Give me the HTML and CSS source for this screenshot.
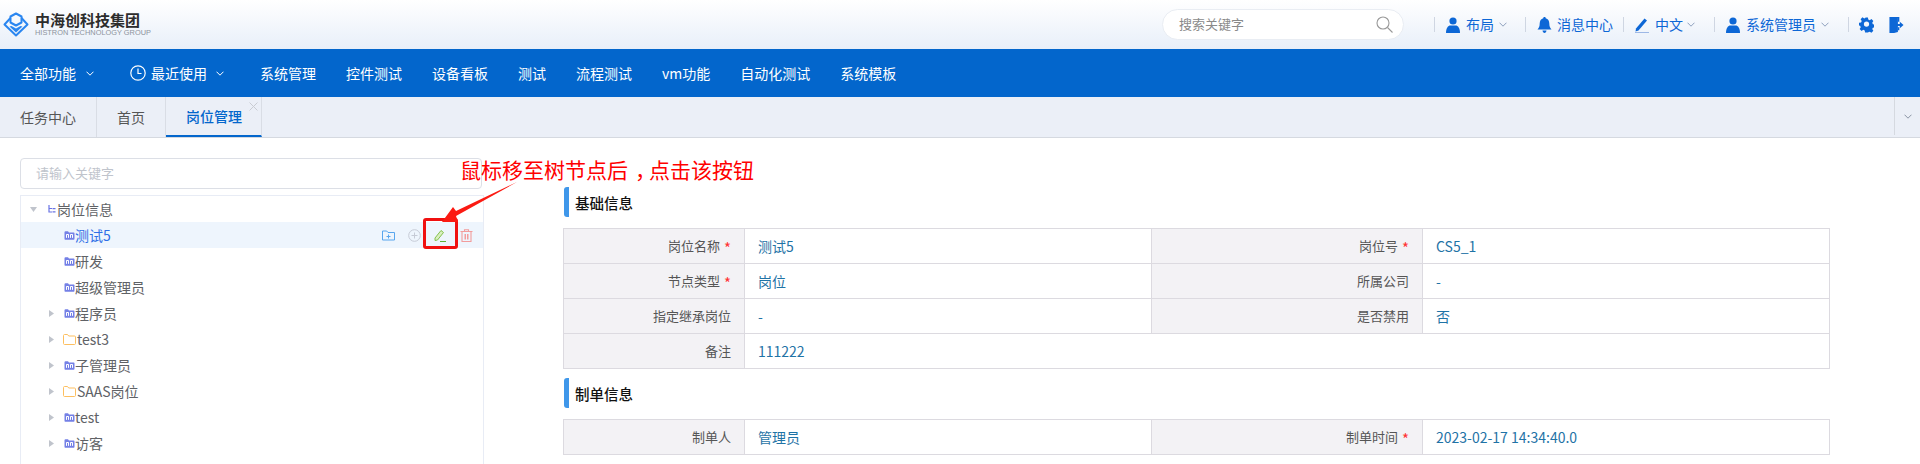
FILE: index.html
```html
<!DOCTYPE html>
<html lang="zh-CN">
<head>
<meta charset="utf-8">
<title>岗位管理</title>
<link rel="stylesheet" href="styles.css">
</head>
<body>
<svg class="defs" aria-hidden="true">
  <symbol id="i-person" viewBox="0 0 16 16"><circle cx="8" cy="4" r="3.6" fill="currentColor"/><path d="M1 16c0-5 2-7.5 4.500-7.500h5C13 8.500 15 11 15 16z" fill="currentColor"/></symbol>
  <symbol id="i-chev" viewBox="0 0 8 5"><path d="M.5.7 4 4.200 7.500.7" fill="none" stroke="currentColor" stroke-width="1"/></symbol>
  <symbol id="i-post" viewBox="0 0 11 9"><path d="M.5 2V1.200C.5.600.9.300 1.500.300h2.500l1 1.200h4.500c.6 0 1 .4 1 1v5.200c0 .6-.4 1-1 1h-8c-.6 0-1-.4-1-1z" fill="#7480e6"/><rect x="2" y="3" width="3" height="4" rx=".8" fill="#fff"/><rect x="6" y="3" width="3" height="4" rx=".8" fill="#fff"/><rect x="3" y="4" width="1" height="3" fill="#7480e6"/><rect x="7" y="4" width="1" height="3" fill="#7480e6"/></symbol>
  <symbol id="i-folder" viewBox="0 0 13 11"><path d="M.5 9.500V1.500c0-.6.4-1 1-1h3l1.200 1.500h5.800c.6 0 1 .4 1 1v6.500c0 .6-.4 1-1 1h-10c-.6 0-1-.4-1-1z" fill="none" stroke="#fdbf5f" stroke-width="1"/></symbol>
  <symbol id="i-right" viewBox="0 0 5 7"><path d="M0 0 5 3.500 0 7z" fill="#c0c4cc"/></symbol>
</svg>

<header class="topbar">
  <div class="logo">
    <svg class="logo-mark" viewBox="0 0 26 25" aria-hidden="true">
      <g fill="none" stroke="#2a86f0" stroke-width="2" stroke-linejoin="round">
        <path d="M13 1.500 18.500 4.500V10.500L13 13.500 7.500 10.500V4.500z"/>
        <path d="M7.500 6 1.500 12.500 13 23.500 24.500 12.500 18.500 6"/>
      </g>
      <path d="M13 16.500 17.500 14 19.500 14.500 13 20.500 6.500 14.500 8.500 14z" fill="#2a86f0"/>
    </svg>
    <div class="logo-text">
      <div class="logo-cn">中海创科技集团</div>
      <div class="logo-en">HISTRON TECHNOLOGY GROUP</div>
    </div>
  </div>
  <div class="top-search">
    <span>搜索关键字</span>
    <svg class="top-search-icon" viewBox="0 0 17 17" aria-hidden="true"><circle cx="7" cy="7" r="6" fill="none" stroke="#999" stroke-width="1.100"/><path d="m11.500 11.500 5 5" stroke="#999" stroke-width="1.100"/></svg>
  </div>
  <div class="tool"><svg class="ti-16"><use href="#i-person"/></svg><span class="tool-label">布局</span><svg class="ti-chev"><use href="#i-chev"/></svg></div>
  <div class="tool tool-plain">
    <svg class="ti-15" viewBox="0 0 15 16" aria-hidden="true"><path d="M7.500 0c.8 0 1.200.5 1.200 1.200C11 1.800 12.300 3.800 12.300 6.500c0 3 .8 4.500 2.200 6H.5c1.400-1.500 2.200-3 2.200-6C2.700 3.800 4 1.800 6.300 1.200 6.300.5 6.700 0 7.500 0z" fill="currentColor"/><path d="M5.500 13.500h4C9.300 15 8.500 16 7.500 16s-1.800-1-2-2.500z" fill="currentColor"/></svg>
    <span class="tool-label">消息中心</span>
  </div>
  <div class="tool tool-lang">
    <svg class="ti-14" viewBox="0 0 14 16" aria-hidden="true"><path d="M1 11.500 9.500 1.500l2.500 2-8.500 10L.5 14.500z" fill="currentColor"/><path d="M0 15.500h14" stroke="#9db8e6" stroke-width="1"/></svg>
    <span class="tool-label">中文</span><svg class="ti-chev"><use href="#i-chev"/></svg>
  </div>
  <div class="tool tool-user"><svg class="ti-16"><use href="#i-person"/></svg><span class="tool-label">系统管理员</span><svg class="ti-chev"><use href="#i-chev"/></svg></div>
  <div class="tool tool-end">
    <svg class="ti-15" viewBox="0 0 16 16" aria-hidden="true"><path d="M6.500 0h3l.4 2.200 1.500.7 1.900-1.200 2 2.100-1.200 1.900.7 1.500 2.200.4v2.800l-2.200.4-.7 1.500 1.200 1.900-2 2.100-1.900-1.200-1.500.7L9.500 16h-3l-.4-2.200-1.500-.7-1.900 1.200-2-2.100 1.200-1.900-.7-1.500L0 8.400V5.600l2.200-.4.700-1.500L1.700 1.800l2-2.100L5.600 1l1.500-.7z" fill="currentColor"/><circle cx="8" cy="7" r="2.800" fill="#f3f6fc"/></svg>
    <svg class="ti-15" viewBox="0 0 15 17" aria-hidden="true"><path d="M0 1h9v15l-4 1H0z" fill="currentColor"/><path d="M9 1v4H10.500V0H0v1zM10.500 11v3H9v-3z" fill="currentColor"/><path d="M7 7.500h4V5l4 3.500-4 3.500V9.500H7z" fill="currentColor"/></svg>
  </div>
</header>

<nav class="nav">
  <div class="nav-menu"><span>全部功能</span><svg class="nav-chev"><use href="#i-chev"/></svg></div>
  <div class="nav-menu">
    <svg class="nav-clock" viewBox="0 0 16 16" aria-hidden="true"><circle cx="8" cy="8" r="7.200" fill="none" stroke="#fff" stroke-width="1.200"/><path d="M8 3.500V8.500H11.500" fill="none" stroke="#fff" stroke-width="1.200"/></svg>
    <span class="nav-recent">最近使用</span><svg class="nav-chev nav-chev-tight"><use href="#i-chev"/></svg>
  </div>
  <a class="nav-link">系统管理</a>
  <a class="nav-link">控件测试</a>
  <a class="nav-link">设备看板</a>
  <a class="nav-link">测试</a>
  <a class="nav-link">流程测试</a>
  <a class="nav-link">vm功能</a>
  <a class="nav-link">自动化测试</a>
  <a class="nav-link">系统模板</a>
</nav>

<div class="tabs">
  <div class="tab">任务中心</div>
  <div class="tab">首页</div>
  <div class="tab tab-active">岗位管理<svg class="tab-close" viewBox="0 0 9 9" aria-hidden="true"><path d="m.5.5 8 8m0-8-8 8" stroke="#c9ccd2" stroke-width="1"/></svg></div>
  <div class="tab-more"><svg class="ti-chev tab-more-icon"><use href="#i-chev"/></svg></div>
</div>

<main class="main">
  <section class="left">
    <div class="filter">请输入关键字</div>
    <div class="tree">
      <div class="row row-root">
        <svg class="caret-down" viewBox="0 0 7 5" aria-hidden="true"><path d="M0 0h7L3.500 5z" fill="#c0c4cc"/></svg>
        <svg class="root-icon" viewBox="0 0 8 8" aria-hidden="true"><path d="M1 0v7h3M1 3.500h3" fill="none" stroke="#6a74e4" stroke-width="1.200"/><path d="M4.500 3h3v1.200h-3zM4.500 6.300h3v1.200h-3z" fill="#6a74e4"/></svg>
        <span>岗位信息</span>
      </div>
      <div class="row row-leaf row-current">
        <svg class="post-icon"><use href="#i-post"/></svg><span>测试5</span>
        <div class="actions">
          <svg class="act" viewBox="0 0 13 12" aria-hidden="true"><path d="M.5 10.500V1.500h4.200l1.300 1.500h6.500v7.500z" fill="none" stroke="#58a6ee" stroke-width="1"/><path d="M6.500 5v4M4.500 7h4" stroke="#58a6ee" stroke-width="1"/></svg>
          <svg class="act" viewBox="0 0 13 13" aria-hidden="true"><circle cx="6.500" cy="6.500" r="5.800" fill="none" stroke="#c6cbd6" stroke-width="1"/><path d="M6.500 3.500v6M3.500 6.500h6" stroke="#c6cbd6" stroke-width="1"/></svg>
          <svg class="act" viewBox="0 0 13 13" aria-hidden="true"><path d="M1 9 7 1.500l2.500 2-6 7.500-2.500.5z" fill="#d9efc0" stroke="#84c24d" stroke-width="1"/><path d="M6 12.500h6" stroke="#5fb336" stroke-width="1"/></svg>
          <svg class="act" viewBox="0 0 13 13" aria-hidden="true"><path d="M.5 2.500h12M4.500 2.500V.7h4v1.800M2 2.500v10h9v-10" fill="none" stroke="#f29c9c" stroke-width="1.100"/><path d="M4.500 5h1.500v5.500H4.500zM7 5h1.500v5.500H7z" fill="#f29c9c"/></svg>
        </div>
      </div>
      <div class="row row-leaf"><svg class="post-icon"><use href="#i-post"/></svg><span>研发</span></div>
      <div class="row row-leaf"><svg class="post-icon"><use href="#i-post"/></svg><span>超级管理员</span></div>
      <div class="row"><svg class="caret-right"><use href="#i-right"/></svg><svg class="post-icon"><use href="#i-post"/></svg><span>程序员</span></div>
      <div class="row"><svg class="caret-right"><use href="#i-right"/></svg><svg class="folder-icon"><use href="#i-folder"/></svg><span>test3</span></div>
      <div class="row"><svg class="caret-right"><use href="#i-right"/></svg><svg class="post-icon"><use href="#i-post"/></svg><span>子管理员</span></div>
      <div class="row"><svg class="caret-right"><use href="#i-right"/></svg><svg class="folder-icon"><use href="#i-folder"/></svg><span>SAAS岗位</span></div>
      <div class="row"><svg class="caret-right"><use href="#i-right"/></svg><svg class="post-icon"><use href="#i-post"/></svg><span>test</span></div>
      <div class="row"><svg class="caret-right"><use href="#i-right"/></svg><svg class="post-icon"><use href="#i-post"/></svg><span>访客</span></div>
    </div>
  </section>

  <section class="right">
    <h2 class="heading">基础信息</h2>
    <table class="info">
      <colgroup><col class="c1"><col class="c2"><col class="c3"><col class="c4"></colgroup>
      <tr><th>岗位名称<i>*</i></th><td>测试5</td><th>岗位号<i>*</i></th><td>CS5_1</td></tr>
      <tr><th>节点类型<i>*</i></th><td>岗位</td><th>所属公司</th><td>-</td></tr>
      <tr><th>指定继承岗位</th><td>-</td><th>是否禁用</th><td>否</td></tr>
      <tr><th>备注</th><td colspan="3">111222</td></tr>
    </table>
    <h2 class="heading heading-next">制单信息</h2>
    <table class="info">
      <colgroup><col class="c1"><col class="c2"><col class="c3"><col class="c4"></colgroup>
      <tr><th>制单人</th><td>管理员</td><th>制单时间<i>*</i></th><td>2023-02-17 14:34:40.0</td></tr>
    </table>
  </section>
</main>

<div class="note">鼠标移至树节点后<span class="note-comma">，</span>点击该按钮</div>
<div class="note-box"></div>
<svg class="note-arrow" viewBox="0 0 80 44" aria-hidden="true"><path d="M75 0 14 29 11 25 0 40 16 40 14 34z" fill="#fb1a12"/></svg>
</body>
</html>
```
FILE: styles.css
```css
* { box-sizing: border-box; }
html, body { margin: 0; height: 464px; overflow: hidden; background: #fff; }
body { font: 14px "Noto Sans CJK SC", "Noto Sans", sans-serif; color: #606266; position: relative; }
.defs { position: absolute; width: 0; height: 0; }
svg { display: block; flex: none; }

.topbar { height: 49px; display: flex; align-items: center; padding-right: 16px; background: linear-gradient(#fff, #e8eff9); color: #0d67d6; }
.logo { display: flex; align-items: flex-start; margin-left: 3px; margin-right: auto; }
.logo-mark { width: 26px; height: 25px; }
.logo-text { margin-left: 6px; width: 104px; }
.logo-cn { font-size: 15px; line-height: 15px; font-weight: 700; color: #2c2c2c; white-space: nowrap; }
.logo-en { font: 7.400px/8px "Liberation Sans", sans-serif; color: #8d939c; margin-top: 2px; white-space: nowrap; }
.top-search { width: 242px; height: 31px; margin-right: 30px; padding: 0 10px 0 16px; display: flex; align-items: center; justify-content: space-between; background: #fff; border: 1px solid #e9edf3; border-radius: 16px; font-size: 13px; color: #8a8a8a; }
.top-search span { margin-bottom: 2px; }
.top-search-icon { width: 17px; height: 17px; }
.tool { height: 15px; display: flex; align-items: center; padding: 0 18px 0 10px; border-left: 1px solid #cfd6e2; }
.tool-plain { padding: 0 10px 0 11px; }
.tool-lang { padding: 0 19px 0 11px; }
.tool-lang .ti-chev { margin-left: 4px; }
.tool-lang .tool-label { margin-left: 6px; }
.tool-user { padding: 0 19px 0 10px; }
.tool-end { padding-right: 0; gap: 15px; }
.tool-label { line-height: 15px; white-space: nowrap; margin-left: 5px; }
.ti-16 { width: 16px; height: 16px; }
.ti-15 { width: 15px; height: 16px; }
.ti-14 { width: 14px; height: 16px; }
.ti-chev { width: 8px; height: 5px; margin-left: 5px; color: #8ea0bd; }

.nav { height: 48px; display: flex; align-items: center; gap: 30px; padding-left: 20px; background: #0366cc; color: #fff; }
.nav-menu { display: flex; align-items: center; margin-right: 6px; }
.nav-chev { width: 8px; height: 5px; margin-left: 10px; color: #fff; }
.nav-chev-tight { margin-left: 9px; }
.nav-clock { width: 16px; height: 16px; }
.nav-recent { margin-left: 5px; }
.nav-link { white-space: nowrap; }

.tabs { height: 41px; display: flex; background: #ebeff7; border-bottom: 1px solid #d5d9e0; }
.tab { height: 40px; padding: 0 20px; display: flex; align-items: center; border-right: 1px solid #d9dde5; color: #555; position: relative; }
.tab-active { padding-right: 19px; color: #0366cc; font-weight: 500; border-bottom: 2px solid #0366cc; }
.tab-close { position: absolute; top: 5px; right: 3px; width: 9px; height: 9px; }
.tab-more { margin-left: auto; width: 26px; height: 38px; border-left: 1px solid #d5d9e0; display: flex; align-items: center; justify-content: center; }
.tab-more-icon { margin-left: 0; color: #8a93a3; }

.main { display: flex; align-items: flex-start; padding: 20px 0 0 20px; }
.left { width: 464px; flex: none; }
.filter { width: 462px; height: 31px; padding: 0 0 2px 15px; display: flex; align-items: center; border: 1px solid #dcdfe6; border-radius: 4px; font-size: 13px; color: #c0c4cc; }
.tree { margin-top: 6px; height: 269px; border: 1px solid #e8ecf5; border-bottom: 0; }
.row { height: 26px; display: flex; align-items: center; padding-left: 28px; }
.row-root { padding-left: 9px; }
.row-leaf { padding-left: 43px; }
.row-current { background: #eef5fd; color: #2e6fe6; }
.caret-down { width: 7px; height: 5px; margin-right: 11px; }
.root-icon { width: 8px; height: 8px; margin-right: 1px; }
.caret-right { width: 5px; height: 7px; margin-right: 10px; }
.post-icon { width: 11px; height: 9px; }
.folder-icon { width: 13px; height: 11px; margin-left: -1px; margin-right: 1px; }
.actions { margin-left: auto; margin-right: 10px; display: flex; align-items: center; gap: 13px; }
.act { width: 13px; height: 13px; }

.right { width: 1266px; margin-left: 79px; padding-top: 29px; }
.heading { margin: 0 0 11px 1px; height: 30px; padding: 0 0 0 6px; display: flex; align-items: center; border-left: 5px solid #3f97ea; border-radius: 3px; font-size: 14.500px; font-weight: 500; color: #111; }
.heading-next { margin-top: 9px; }
.info { width: 1266px; border-collapse: collapse; table-layout: fixed; }
.c1 { width: 181px; }
.c2 { width: 407px; }
.c3 { width: 271px; }
.c4 { width: 407px; }
.info th, .info td { height: 35px; padding: 0 13px; border: 1px solid #dcdae0; white-space: nowrap; }
.info th { padding-bottom: 2px; background: #f3f2f5; text-align: right; font-size: 13px; font-weight: 400; color: #555; }
.info td { padding-bottom: 1px; font-size: 14px; color: #1f73a6; }
.info i { font-style: normal; font-size: 15px; line-height: 13px; vertical-align: -3px; color: #f33; margin-left: 4px; }

.note { position: absolute; left: 460px; top: 153px; font-size: 21px; line-height: 32px; color: #f00; white-space: nowrap; }
.note-comma { padding-left: 7px; margin-right: -7px; }
.note-box { position: absolute; left: 423px; top: 218px; width: 35px; height: 31px; border: 3px solid #f01010; border-radius: 3px; }
.note-arrow { position: absolute; left: 442px; top: 182px; width: 80px; height: 44px; }
```
